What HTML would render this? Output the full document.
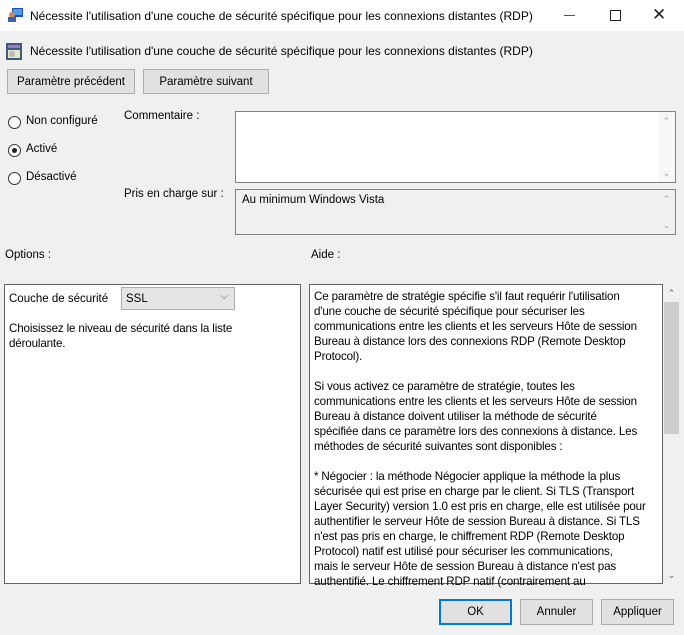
<!DOCTYPE html>
<html><head><meta charset="utf-8"><style>
*{box-sizing:border-box;margin:0;padding:0}
body{width:684px;height:635px;background:#f0f0f0;font-family:"Liberation Sans",sans-serif;font-size:11.5px;color:#000;position:relative;overflow:hidden}
.a{position:absolute;white-space:nowrap}
.btn{position:absolute;background:#e1e1e1;border:1px solid #adadad;display:flex;align-items:center;justify-content:center}
.box{position:absolute;border:1px solid #828282;background:#fff}
.sb{position:absolute;right:0;top:0;bottom:0;width:17px;background:#f0f0f0;color:#a0a0a0;font-size:9px;text-align:center}
.radio{position:absolute;width:13px;height:13px;border:1px solid #333;border-radius:50%;background:#fff}
.help{line-height:15px;letter-spacing:-0.15px;font-size:11.6px}
</style></head><body>
<div class="a" style="left:0;top:0;width:684px;height:31px;background:#fff"></div>
<svg class="a" style="left:7px;top:7px" width="17" height="16"><rect x="5" y="1" width="11" height="9" fill="#1a4fb8"/><rect x="6" y="2" width="9" height="6" fill="#4a9ff0"/><circle cx="5" cy="8" r="3" fill="#c58a5a"/><rect x="1" y="10" width="8" height="5" fill="#3d63a8"/></svg>
<div class="a" style="left:30px;top:9px;font-size:12px">Nécessite l'utilisation d'une couche de sécurité spécifique pour les connexions distantes (RDP)</div>
<div class="a" style="left:564px;top:15px;width:11px;height:1px;background:#555"></div>
<div class="a" style="left:610px;top:10px;width:11px;height:11px;border:1px solid #222"></div>
<div class="a" style="left:652px;top:5px;font-size:17px;color:#222">✕</div>
<svg class="a" style="left:6px;top:43px" width="16" height="17"><rect x="0" y="0" width="16" height="17" fill="#3b5c7a"/><rect x="2" y="2" width="12" height="3" fill="#9a77c8"/><rect x="2" y="7" width="12" height="8" fill="#e8e4c8"/><circle cx="6" cy="11" r="3" fill="#bbb"/></svg>
<div class="a" style="left:30px;top:44px;font-size:12px">Nécessite l'utilisation d'une couche de sécurité spécifique pour les connexions distantes (RDP)</div>
<div class="btn" style="left:7px;top:69px;width:128px;height:25px">Paramètre précédent</div>
<div class="btn" style="left:143px;top:69px;width:126px;height:25px">Paramètre suivant</div>
<div class="radio" style="left:8px;top:116px"></div><div class="a" style="left:26px;top:115px">Non configuré</div>
<div class="radio" style="left:8px;top:144px"><div style="position:absolute;left:3px;top:3px;width:5px;height:5px;border-radius:50%;background:#222"></div></div><div class="a" style="left:26px;top:143px">Activé</div>
<div class="radio" style="left:8px;top:172px"></div><div class="a" style="left:26px;top:171px">Désactivé</div>
<div class="a" style="left:124px;top:110px">Commentaire :</div>
<div class="box" style="left:235px;top:111px;width:441px;height:72px"><div class="sb" style="background:#f7f7f7"><div style="margin-top:4px">⌃</div><div style="position:absolute;bottom:3px;width:17px">⌄</div></div></div>
<div class="a" style="left:124px;top:188px">Pris en charge sur :</div>
<div class="box" style="left:235px;top:189px;width:441px;height:46px;background:#f0f0f0"><div class="a" style="left:6px;top:4px">Au minimum Windows Vista</div><div class="sb"><div style="margin-top:4px">⌃</div><div style="position:absolute;bottom:3px;width:17px">⌄</div></div></div>
<div class="a" style="left:5px;top:249px">Options :</div>
<div class="a" style="left:311px;top:249px">Aide :</div>
<div class="box" style="left:4px;top:284px;width:297px;height:300px;border-color:#646464">
<div class="a" style="left:4px;top:8px">Couche de sécurité</div>
<div class="a" style="left:116px;top:2px;width:114px;height:23px;background:#e5e5e5;border:1px solid #adadad"><span class="a" style="left:4px;top:5px">SSL</span><span class="a" style="right:6px;top:3px;color:#555;font-size:10px">⌵</span></div>
<div class="a help" style="left:4px;top:36px">Choisissez le niveau de sécurité dans la liste<br>déroulante.</div>
</div>
<div class="box" style="left:309px;top:284px;width:354px;height:300px;border-color:#646464">
<div class="a help" style="left:4px;top:4px">Ce paramètre de stratégie spécifie s'il faut requérir l'utilisation<br>d'une couche de sécurité spécifique pour sécuriser les<br>communications entre les clients et les serveurs Hôte de session<br>Bureau à distance lors des connexions RDP (Remote Desktop<br>Protocol).<br><br>Si vous activez ce paramètre de stratégie, toutes les<br>communications entre les clients et les serveurs Hôte de session<br>Bureau à distance doivent utiliser la méthode de sécurité<br>spécifiée dans ce paramètre lors des connexions à distance. Les<br>méthodes de sécurité suivantes sont disponibles :<br><br>* Négocier : la méthode Négocier applique la méthode la plus<br>sécurisée qui est prise en charge par le client. Si TLS (Transport<br>Layer Security) version 1.0 est pris en charge, elle est utilisée pour<br>authentifier le serveur Hôte de session Bureau à distance. Si TLS<br>n'est pas pris en charge, le chiffrement RDP (Remote Desktop<br>Protocol) natif est utilisé pour sécuriser les communications,<br>mais le serveur Hôte de session Bureau à distance n'est pas<br>authentifié. Le chiffrement RDP natif (contrairement au</div>
</div>
<div class="a" style="left:663px;top:284px;width:17px;height:300px;background:#f0f0f0;color:#606060;font-size:9px;text-align:center"><div style="margin-top:4px">⌃</div><div style="position:absolute;left:1px;top:18px;width:15px;height:132px;background:#cdcdcd"></div><div style="position:absolute;bottom:3px;width:17px">⌄</div></div>
<div class="btn" style="left:439px;top:599px;width:73px;height:26px;border:2px solid #0078d7">OK</div>
<div class="btn" style="left:520px;top:599px;width:73px;height:26px">Annuler</div>
<div class="btn" style="left:601px;top:599px;width:73px;height:26px">Appliquer</div>
</body></html>
